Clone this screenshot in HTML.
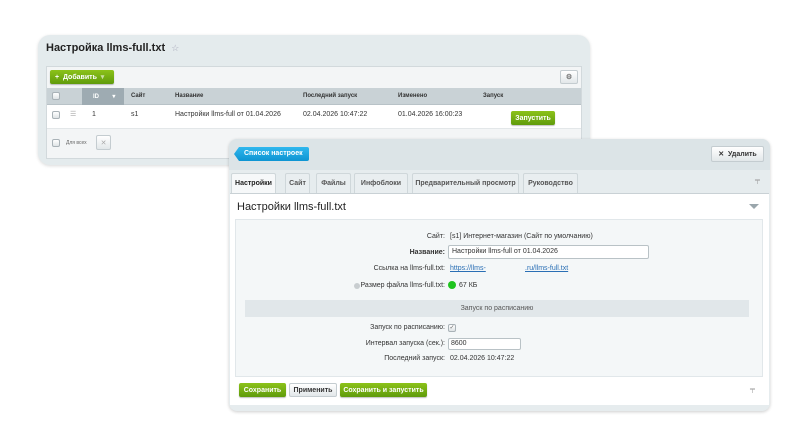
<!DOCTYPE html>
<html><head><meta charset="utf-8"><style>
*{box-sizing:border-box;margin:0;padding:0}
body{width:804px;height:448px;background:#fff;font-family:"Liberation Sans",Arial,sans-serif;position:relative;overflow:hidden;color:#333}
.a{position:absolute}
.t{font-size:7px;white-space:nowrap}
.gbtn,.wbtn{display:flex;align-items:center;justify-content:center}
.gbtn{background:linear-gradient(#8cc21a,#5f9b0c);color:#fff;font-weight:bold;border-radius:2px;font-size:7px;box-shadow:0 1px 1px rgba(0,0,0,.25)}
.wbtn{background:linear-gradient(#fff,#e2e7e9);border:1px solid #c4ccd0;border-radius:2px;font-size:7px;color:#333;font-weight:bold}
.cb{width:8px;height:8px;border:1px solid #a9b2b7;border-radius:2px;background:linear-gradient(#fff,#dfe4e6)}
.tab{position:absolute;top:173px;height:20px;background:#e9eef0;border:1px solid #cfd7da;border-bottom:none;font-size:7px;font-weight:bold;color:#555;text-align:center;line-height:19px;border-radius:2px 2px 0 0}
</style></head><body>
<div class="a" style="left:38px;top:35px;width:552px;height:130px;background:#e4ebed;border-radius:12px;box-shadow:0 1px 3px rgba(0,0,0,.15)"></div>
<div class="a" style="left:46px;top:42px;font-size:11px;font-weight:bold;color:#222">Настройка llms-full.txt &nbsp;<span style="color:#aab;font-size:9px;font-weight:normal">☆</span></div>
<div class="a" style="left:46px;top:66px;width:536px;height:93px;background:#f3f5f6;border:1px solid #d2d9dc"></div>
<div class="a gbtn" style="left:50px;top:70px;width:64px;height:14px;justify-content:flex-start;padding-left:5px">+ &nbsp;Добавить &nbsp;<span style="opacity:.6">▾</span></div>
<div class="a wbtn" style="left:560px;top:70px;width:18px;height:14px;color:#777">⚙</div>
<div class="a" style="left:47px;top:88px;width:534px;height:17px;background:#c9d2d6;border-bottom:1px solid #b8c2c7"></div>
<div class="a" style="left:82px;top:88px;width:42px;height:17px;background:#9eabb2"></div>
<div class="a cb" style="left:52px;top:92px"></div>
<div class="a t" style="left:93px;top:93px;color:#fff;font-weight:bold;font-size:6px">ID &nbsp;&nbsp;&nbsp;&nbsp;&nbsp;&nbsp;&nbsp;▾</div>
<div class="a t" style="left:131px;top:93px;font-weight:bold;font-size:6px">Сайт</div>
<div class="a t" style="left:175px;top:93px;font-weight:bold;font-size:6px">Название</div>
<div class="a t" style="left:303px;top:93px;font-weight:bold;font-size:6px">Последний запуск</div>
<div class="a t" style="left:398px;top:93px;font-weight:bold;font-size:6px">Изменено</div>
<div class="a t" style="left:483px;top:93px;font-weight:bold;font-size:6px">Запуск</div>
<div class="a" style="left:47px;top:105px;width:534px;height:24px;background:#fff;border-bottom:1px solid #e3e7e9"></div>
<div class="a cb" style="left:52px;top:111px"></div>
<div class="a t" style="left:70px;top:110px;color:#aaa">☰</div>
<div class="a t" style="left:92px;top:111px">1</div>
<div class="a t" style="left:131px;top:111px">s1</div>
<div class="a t" style="left:175px;top:111px">Настройки llms-full от 01.04.2026</div>
<div class="a t" style="left:303px;top:111px">02.04.2026 10:47:22</div>
<div class="a t" style="left:398px;top:111px">01.04.2026 16:00:23</div>
<div class="a gbtn" style="left:511px;top:111px;width:44px;height:14px">Запустить</div>
<div class="a cb" style="left:52px;top:139px"></div>
<div class="a t" style="left:66px;top:140px;font-size:5px;color:#666">Для всех</div>
<div class="a wbtn" style="left:96px;top:135px;width:15px;height:15px;color:#aaa;font-weight:normal">✕</div>
<div class="a" style="left:229px;top:139px;width:541px;height:272px;background:#e6ecee;border-radius:8px;box-shadow:0 1px 3px rgba(0,0,0,.2)"></div>
<div class="a" style="left:229px;top:139px;width:541px;height:31px;background:#dce4e7;border-radius:8px 8px 0 0"></div>
<div class="a" style="left:234px;top:147px;width:75px;height:14px;background:linear-gradient(#2fb7ee,#0d94d2);color:#fff;font-size:7px;font-weight:bold;line-height:14px;padding-left:10px;border-radius:2px;clip-path:polygon(5px 0,100% 0,100% 100%,5px 100%,0 50%)">Список настроек</div>
<div class="a wbtn" style="left:711px;top:146px;width:53px;height:16px">✕ &nbsp;Удалить</div>
<div class="tab" style="left:231px;width:45px;background:#f6f8f9;color:#222;height:21px">Настройки</div>
<div class="tab" style="left:285px;width:25px">Сайт</div>
<div class="tab" style="left:316px;width:35px">Файлы</div>
<div class="tab" style="left:354px;width:54px">Инфоблоки</div>
<div class="tab" style="left:412px;width:107px">Предварительный просмотр</div>
<div class="tab" style="left:523px;width:55px">Руководство</div>
<div class="a t" style="left:755px;top:177px;color:#999">╤</div>
<div class="a" style="left:230px;top:193px;width:539px;height:212px;background:#fff;border-top:1px solid #c9d1d5"></div>
<div class="a" style="left:237px;top:201px;font-size:11px;color:#222">Настройки llms-full.txt</div>
<div class="a" style="left:749px;top:204px;width:0;height:0;border-left:5px solid transparent;border-right:5px solid transparent;border-top:5px solid #9aa6ac"></div>
<div class="a" style="left:235px;top:219px;width:528px;height:158px;background:#f4f7f8;border:1px solid #e1e7ea"></div>
<div class="a t" style="left:445px;top:233px;transform:translateX(-100%)">Сайт:</div>
<div class="a t" style="left:450px;top:233px">[s1] Интернет-магазин (Сайт по умолчанию)</div>
<div class="a t" style="left:445px;top:249px;transform:translateX(-100%);font-weight:bold">Название:</div>
<div class="a" style="left:448px;top:245px;width:201px;height:14px;background:#fff;border:1px solid #b9c2c6;border-radius:2px;font-size:7px;line-height:12px;padding-left:3px">Настройки llms-full от 01.04.2026</div>
<div class="a t" style="left:445px;top:265px;transform:translateX(-100%)">Ссылка на llms-full.txt:</div>
<div class="a t" style="left:450px;top:265px;color:#2a6fb5;text-decoration:underline">https://llms-</div>
<div class="a t" style="left:525px;top:265px;color:#2a6fb5;text-decoration:underline">.ru/llms-full.txt</div>
<div class="a" style="left:354px;top:283px;width:6px;height:6px;border-radius:50%;background:#c8cdd0"></div>
<div class="a t" style="left:445px;top:282px;transform:translateX(-100%)">Размер файла llms-full.txt:</div>
<div class="a" style="left:448px;top:281px;width:8px;height:8px;border-radius:50%;background:#1fc41f"></div>
<div class="a t" style="left:459px;top:282px">67 КБ</div>
<div class="a" style="left:245px;top:300px;width:504px;height:17px;background:#e1e7ea;font-size:7px;text-align:center;line-height:17px;color:#555">Запуск по расписанию</div>
<div class="a t" style="left:445px;top:324px;transform:translateX(-100%)">Запуск по расписанию:</div>
<div class="a cb" style="left:448px;top:324px;font-size:6px;line-height:6px;color:#666;text-align:center">✓</div>
<div class="a t" style="left:445px;top:340px;transform:translateX(-100%)">Интервал запуска (сек.):</div>
<div class="a" style="left:448px;top:338px;width:73px;height:12px;background:#fff;border:1px solid #b9c2c6;border-radius:2px;font-size:7px;line-height:10px;padding-left:2px">8600</div>
<div class="a t" style="left:445px;top:355px;transform:translateX(-100%)">Последний запуск:</div>
<div class="a t" style="left:450px;top:355px">02.04.2026 10:47:22</div>
<div class="a gbtn" style="left:239px;top:383px;width:47px;height:14px">Сохранить</div>
<div class="a wbtn" style="left:289px;top:383px;width:48px;height:14px">Применить</div>
<div class="a gbtn" style="left:340px;top:383px;width:87px;height:14px">Сохранить и запустить</div>
<div class="a t" style="left:750px;top:386px;color:#999">╤</div>
</body></html>
